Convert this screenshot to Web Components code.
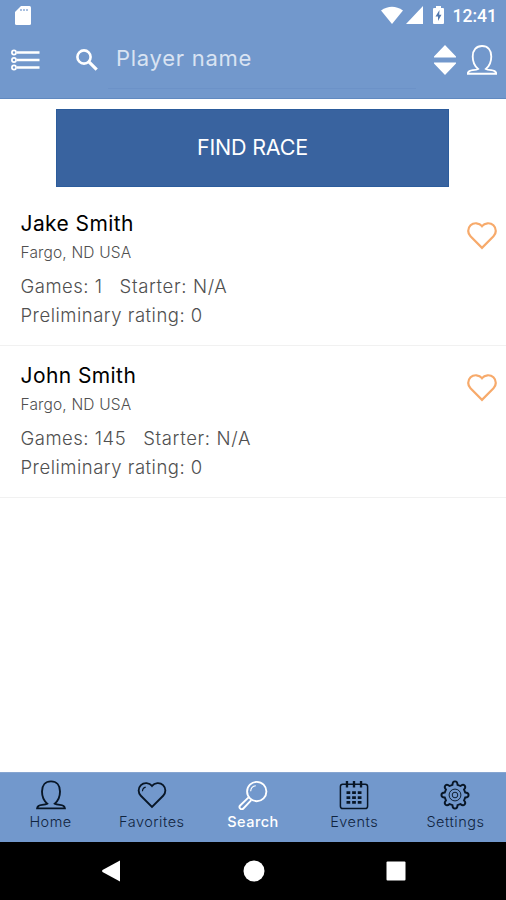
<!DOCTYPE html>
<html lang="en">
<head>
<meta charset="utf-8">
<title>Player search</title>
<style>
  body {
    margin: 0;
    font-family: Inter, "Liberation Sans", sans-serif;
    font-weight: 300;
    background: #fff;
  }
</style>
</head>
<body>
<app-screen>
  <status-bar slot="top" time="12:41"></status-bar>
  <search-bar slot="top" placeholder="Player name"></search-bar>
  <race-button>FIND RACE</race-button>
  <player-row games="1" starter="N/A" rating="0">
    <span slot="name">Jake Smith</span>
    <span slot="place">Fargo, ND USA</span>
  </player-row>
  <player-row games="145" starter="N/A" rating="0">
    <span slot="name">John Smith</span>
    <span slot="place">Fargo, ND USA</span>
  </player-row>
  <nav-tabs slot="bottom">
    <nav-tab icon="person">Home</nav-tab>
    <nav-tab icon="heart">Favorites</nav-tab>
    <nav-tab icon="glass" active>Search</nav-tab>
    <nav-tab icon="calendar">Events</nav-tab>
    <nav-tab icon="gear">Settings</nav-tab>
  </nav-tabs>
  <system-bar slot="bottom"></system-bar>
</app-screen>

<script>
/**
 * Creates a template from markup.
 *
 * @param {string} html - The markup, styles included.
 * @returns {HTMLTemplateElement} The template.
 */
function createTemplate (html) {
  const template = document.createElement('template')
  template.innerHTML = html
  return template
}

// Icon drawings, all on a 32 x 32 grid.
const icons = {
  person: `
    <path d="M12 25.200C8.500 22.300 6.400 17.500 6.400 12.300 6.400 5.800 10 1.500 16 1.500s9.600 4.300 9.600 10.800c0 5.200-2.100 10-5.600 12.900 1.300.9 3.300 1.100 5.500 1.300 3.200.3 5 1.300 5.300 3.700H1.200c.3-2.400 2.100-3.400 5.300-3.700 2.200-.2 4.200-.4 5.500-1.300z"/>`,
  heart: `
    <path d="M16 6.300C13.200 2.800 7.500 2.300 4.200 5.500c-3.400 3.300-3.100 8.200-.1 11.300L16 28.800l11.900-12c3-3.100 3.300-8 -.1-11.300C24.500 2.300 18.800 2.800 16 6.300z"/>`,
  glint: `
    <path d="M5.800 12c.1-2.300 1.400-3.900 3.500-4.400" stroke-width="1.200"/>`,
  glass: `
    <circle cx="20" cy="12.300" r="10.300"/>
    <path d="M13.500 12c.2-3.300 2.400-5.500 5.500-5.800" stroke-width="1.200"/>
    <path d="M11.300 18.500l-9 8.700a2.300 2.300 0 0 0 3.400 3.200l8.500-9"/>`,
  calendar: `
    <rect x="1.500" y="4.500" width="29" height="26" rx="2.500" stroke-width="1.600"/>
    <path d="M8.500 1v7M16 1v7M23.500 1v7" stroke-width="2.500"/>
    <path d="M8 13.500h16M8 18.700h16M8 23.900h16" stroke-width="3" stroke-dasharray="4 2"/>`,
  gear: `
    <path d="M13.300 5.100Q13.400 1.500 16 1.500t2.700 3.600l3.100 1.300Q24.400 4 26.200 5.800t-.6 4.400l1.300 3.100Q30.500 13.400 30.500 16t-3.600 2.700l-1.300 3.100Q28 24.400 26.200 26.200t-4.400-.6l-3.100 1.300Q18.600 30.500 16 30.500t-2.700-3.600l-3.100-1.300Q7.600 28 5.800 26.200t.6-4.400l-1.300-3.100Q1.500 18.600 1.500 16t3.600-2.700l1.300-3.100Q4 7.600 5.800 5.800t4.400.6z"/>
    <circle cx="16" cy="16" r="6.300" stroke-width="1"/>
    <circle cx="16" cy="16" r="3" stroke-width="1"/>`
}

/**
 * Base class which clones the template of the subclass.
 */
class BaseElement extends HTMLElement {
  /**
   * Creates an instance and attaches its shadow DOM.
   */
  constructor () {
    super()
    this.attachShadow({ mode: 'open' })
      .append(this.constructor.template.content.cloneNode(true))
  }
}

/**
 * The whole screen: bars at the top and bottom, content between.
 */
class AppScreen extends BaseElement {
  static template = createTemplate(`
    <style>
      :host {
        display: flex;
        flex-direction: column;
        height: 900px;
        overflow: hidden;
      }
      header {
        height: 99px;
        background: #7298cc;
        border-bottom: 1px solid #6089c0;
        box-sizing: border-box;
      }
      main {
        flex: 1;
        padding-top: 10px;
      }
    </style>
    <header><slot name="top"></slot></header>
    <main><slot></slot></main>
    <footer><slot name="bottom"></slot></footer>
  `)
}

/**
 * Status bar with card, network, battery and clock.
 */
class StatusBar extends BaseElement {
  static template = createTemplate(`
    <style>
      :host {
        display: flex;
        align-items: center;
        height: 30px;
        padding: 0 9px 0 15px;
        color: #fff;
        font: 500 17.500px Roboto, sans-serif;
      }
      svg { display: block; fill: #fff; }
      .card { margin-right: auto; }
      .wifi { margin-right: 3px; }
      .signal { margin-right: 10px; }
      .battery { margin-right: 9px; }
      time { line-height: 20px; padding-top: 2px; }
    </style>
    <svg class="card" width="16" height="20" viewBox="0 0 16 20">
      <path d="M6 1h8.500q1.500 0 1.500 1.500v16q0 1.500-1.500 1.500h-13Q0 20 0 18.500V7z"/>
      <path d="M6 4v2M9 4v2M12 4v2" stroke="#7298cc" stroke-width="1.200"/>
    </svg>
    <svg class="wifi" width="22" height="18" viewBox="0 0 22 18">
      <path d="M0 4.500Q11-3 22 4.500L11 18z"/>
    </svg>
    <svg class="signal" width="17" height="18" viewBox="0 0 17 18"><path d="M17 0v18H0z"/></svg>
    <svg class="battery" width="11" height="18" viewBox="0 0 11 18">
      <path d="M3 0h5v2h2q1 0 1 1v14q0 1-1 1H1q-1 0-1-1V3q0-1 1-1h2z"/>
      <path d="M6.500 4L2.500 10.500H5V15l3.500-6.300H6.200z" fill="#5177ad"/>
    </svg>
    <time></time>
  `)

  /**
   * Called when the element is inserted into the DOM.
   */
  connectedCallback () {
    this.shadowRoot.querySelector('time').textContent = this.getAttribute('time')
  }
}

/**
 * Search bar with menu, field, sort and profile icons.
 */
class SearchBar extends BaseElement {
  static template = createTemplate(`
    <style>
      :host {
        display: flex;
        align-items: center;
        height: 60px;
        padding: 0 8px 0 11px;
      }
      svg { display: block; flex: none; fill: none; stroke: #fff; }
      .menu { margin-right: 36px; }
      .lens { margin-right: 10px; }
      .field {
        flex: none;
        box-sizing: border-box;
        width: 308px;
        height: 58px;
        margin-right: 18px;
        padding: 0 8px;
        border-bottom: 1px solid #6c92c8;
        color: #d9e3f2;
        font-size: 22px;
        font-weight: 400;
        line-height: 54px;
        letter-spacing: 0.72px;
      }
      .sort { fill: #fff; stroke: none; margin-right: 11px; }
    </style>
    <svg class="menu" width="29" height="22" viewBox="0 0 29 22" stroke-width="1.700">
      <circle cx="3" cy="3.500" r="2.100"/><circle cx="3" cy="11" r="2.100"/><circle cx="3" cy="18.500" r="2.100"/>
      <path d="M6 3.500h22.500M6 11h22.500M6 18.500h22.500" stroke-width="2.300"/>
    </svg>
    <svg class="lens" width="22" height="22" viewBox="0 0 22 22">
      <circle cx="8" cy="8" r="6.600" stroke-width="2.600"/>
      <path d="M12.700 12.700l8 8" stroke-width="3.200"/>
    </svg>
    <div class="field"></div>
    <svg class="sort" width="22" height="30" viewBox="0 0 22 30">
      <path d="M0 12.500v-1L11 0l11 11.500v1zM0 17.500v1L11 30l11-11.500v-1z"/>
    </svg>
    <svg width="30" height="32" viewBox="0.500 0 31 32" stroke-width="1.900">${icons.person}</svg>
  `)

  /**
   * Called when the element is inserted into the DOM.
   */
  connectedCallback () {
    this.shadowRoot.querySelector('.field').textContent = this.getAttribute('placeholder')
  }
}

/**
 * The wide button over the list.
 */
class RaceButton extends BaseElement {
  static template = createTemplate(`
    <style>
      :host { display: block; margin: 0 57px 7px 56px; }
      button {
        display: block;
        width: 100%;
        height: 78px;
        padding: 0 0 2px;
        border: 1px solid #2c5c9c;
        background: #39639f;
        color: #fff;
        font: 400 21.500px Inter, "Liberation Sans", sans-serif;
        letter-spacing: -0.2px;
      }
    </style>
    <button><slot></slot></button>
  `)
}

/**
 * One player of the result list.
 */
class PlayerRow extends BaseElement {
  static template = createTemplate(`
    <style>
      :host {
        display: flex;
        justify-content: space-between;
        box-sizing: border-box;
        height: 152px;
        padding: 15px 9px 0 20.500px;
        border-bottom: 1px solid #f1f1f1;
        color: #505050;
      }
      .name {
        color: #000;
        font-size: 21px;
        font-weight: 400;
        line-height: 30px;
        letter-spacing: 0.42px;
      }
      .place { font-size: 15.500px; line-height: 27px; letter-spacing: 0.15px; }
      .stats {
        padding-top: 6px;
        font-size: 18.500px;
        line-height: 28.500px;
        letter-spacing: 0.5px;
      }
      .games { margin-right: 17px; }
      .starter { letter-spacing: 0.65px; }
      svg {
        margin-top: 11px;
        fill: none;
        stroke: #f7aa6b;
        stroke-width: 2.300;
      }
    </style>
    <div>
      <div class="name"><slot name="name"></slot></div>
      <div class="place"><slot name="place"></slot></div>
      <div class="stats">
        <div><span class="games"></span><span class="starter"></span></div>
        <div class="rating"></div>
      </div>
    </div>
    <svg width="30" height="30" viewBox="0.500 0 31 31">${icons.heart}</svg>
  `)

  /**
   * Called when the element is inserted into the DOM.
   */
  connectedCallback () {
    const find = selector => this.shadowRoot.querySelector(selector)
    find('.games').textContent = `Games: ${this.getAttribute('games')}`
    find('.starter').textContent = `Starter: ${this.getAttribute('starter')}`
    find('.rating').textContent = `Preliminary rating: ${this.getAttribute('rating')}`
  }
}

/**
 * Container for the tabs.
 */
class NavTabs extends BaseElement {
  static template = createTemplate(`
    <style>
      :host {
        display: grid;
        grid-template-columns: repeat(5, 1fr);
        box-sizing: border-box;
        height: 70px;
        border-top: 1px solid #86a5d1;
        background: #7298cc;
      }
    </style>
    <slot></slot>
  `)
}

/**
 * A tab with an icon over its label.
 */
class NavTab extends BaseElement {
  static template = createTemplate(`
    <style>
      :host {
        display: flex;
        flex-direction: column;
        align-items: center;
        padding-top: 7px;
        color: #10243f;
        font-size: 14.500px;
        line-height: 23px;
        letter-spacing: 0.5px;
      }
      :host([active]) { color: #fff; font-weight: 500; letter-spacing: 0.5px; }
      svg {
        display: block;
        fill: none;
        stroke: #081626;
        stroke-width: 2;
      }
      :host([active]) svg { stroke: #fff; }
    </style>
    <svg width="30" height="30" viewBox="0 0 32 32"></svg>
    <div><slot></slot></div>
  `)

  /**
   * Called when the element is inserted into the DOM.
   */
  connectedCallback () {
    const name = this.getAttribute('icon')
    const glint = name === 'heart' ? icons.glint : ''
    this.shadowRoot.querySelector('svg').innerHTML = icons[name] + glint
  }
}

/**
 * Black bar with back, home and overview.
 */
class SystemBar extends BaseElement {
  static template = createTemplate(`
    <style>
      :host {
        display: flex;
        justify-content: space-between;
        align-items: center;
        height: 58px;
        padding: 0 100px 0 101px;
        background: #000;
      }
      svg { display: block; fill: #fff; }
    </style>
    <svg width="20" height="22" viewBox="0 0 20 22"><path d="M19 .5v21L1.500 12q-1-1 0-2z"/></svg>
    <svg width="22" height="22" viewBox="0 0 22 22"><circle cx="11" cy="11" r="10.500"/></svg>
    <svg width="20" height="20" viewBox="0 0 20 20"><rect x=".5" y=".5" width="19" height="19" rx="1"/></svg>
  `)
}

// Define the custom elements.
customElements.define('app-screen', AppScreen)
customElements.define('status-bar', StatusBar)
customElements.define('search-bar', SearchBar)
customElements.define('race-button', RaceButton)
customElements.define('player-row', PlayerRow)
customElements.define('nav-tabs', NavTabs)
customElements.define('nav-tab', NavTab)
customElements.define('system-bar', SystemBar)
</script>
</body>
</html>
